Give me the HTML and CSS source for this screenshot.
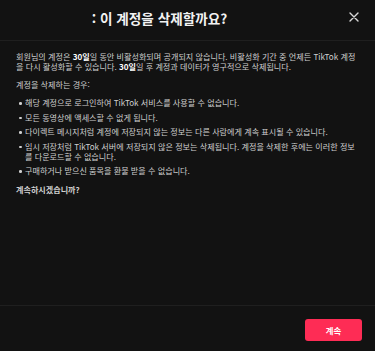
FILE: index.html
```html
<!DOCTYPE html>
<html lang="ko">
<head>
    <meta charset="UTF-8">
    <meta name="viewport" content="width=device-width, initial-scale=1.0">
    <title>계정 삭제</title>
    <link rel="stylesheet" href="styles.css">
</head>
<body>
    <div class="modal">
        <!-- Header -->
        <div class="modal-header">
            <h2>: 이 계정을 삭제할까요?</h2>
            <button class="close-btn" aria-label="닫기">
                <svg width="10" height="10" viewBox="0 0 10 10">
                    <path d="M1 1L9 9M9 1L1 9" stroke="#d8d8d8" stroke-width="1.4" stroke-linecap="round"/>
                </svg>
            </button>
        </div>

        <!-- Body -->
        <div class="modal-body">
            <p>회원님의 계정은 <b>30일</b>일 동안 비활성화되며 공개되지 않습니다. 비활성화 기간 중 언제든 TikTok 계정을 다시 활성화할 수 있습니다. <b>30일</b>일 후 계정과 데이터가 영구적으로 삭제됩니다.</p>
            <p>계정을 삭제하는 경우:</p>
            <ul class="warn-list">
                <li>해당 계정으로 로그인하여 TikTok 서비스를 사용할 수 없습니다.</li>
                <li>모든 동영상에 액세스할 수 없게 됩니다.</li>
                <li>다이렉트 메시지처럼 계정에 저장되지 않는 정보는 다른 사람에게 계속 표시될 수 있습니다.</li>
                <li>임시 저장처럼 TikTok 서버에 저장되지 않은 정보는 삭제됩니다. 계정을 삭제한 후에는 이러한 정보를 다운로드할 수 없습니다.</li>
                <li>구매하거나 받으신 품목을 환불 받을 수 없습니다.</li>
            </ul>
            <p class="confirm">계속하시겠습니까?</p>
        </div>

        <!-- Footer -->
        <div class="modal-footer">
            <button class="continue-btn">계속</button>
        </div>
    </div>
</body>
</html>
```

FILE: styles.css
```css
html, body {
    margin: 0;
    padding: 0;
    height: 100%;
}
body {
    font-family: "Noto Sans CJK KR", "Noto Sans", Arial, sans-serif;
    background-color: #121212;
    color: #cfcfcf;
}
.modal {
    display: flex;
    flex-direction: column;
    height: 100vh;
}
.modal-header {
    display: flex;
    align-items: center;
    height: 41px;
    padding: 0 14px 0 16px;
    border-bottom: 1px solid #1f1f1f;
    box-sizing: border-box;
}
.modal-header h2 {
    flex: 1;
    margin: 0;
    padding: 0 44px 3px 0;
    text-align: center;
    font-size: 13.6px;
    font-weight: 700;
    color: #f2f2f2;
    line-height: 1;
}
.close-btn {
    background: none;
    border: none;
    padding: 0;
    width: 14px;
    height: 14px;
    display: flex;
    align-items: center;
    justify-content: center;
    cursor: pointer;
    margin-top: -6px;
}
.modal-body {
    flex: 1;
    padding: 11px 16px 0 16px;
    font-size: 8.1px;
    line-height: 10px;
    word-break: break-all;
}
.modal-body p {
    margin: 0 0 8px 0;
}
.modal-body b {
    color: #ffffff;
    font-weight: 700;
}
.warn-list {
    margin: 0 0 9px 0;
    padding: 0 0 0 9px;
    list-style: none;
}
.warn-list li {
    position: relative;
    margin-bottom: 4.5px;
}
.warn-list li::before {
    content: "";
    position: absolute;
    left: -6px;
    top: 4px;
    width: 2.5px;
    height: 2.5px;
    border-radius: 50%;
    background-color: #cfcfcf;
}
.confirm {
    font-weight: 700;
}
.modal-footer {
    display: flex;
    justify-content: flex-end;
    padding: 13px 13px 10px 13px;
    border-top: 1px solid #1f1f1f;
}
.continue-btn {
    width: 57px;
    height: 22px;
    background-color: #fe2c55;
    color: #ffffff;
    border: none;
    border-radius: 3px;
    font-family: inherit;
    font-size: 8.4px;
    font-weight: 700;
    cursor: pointer;
}
```
